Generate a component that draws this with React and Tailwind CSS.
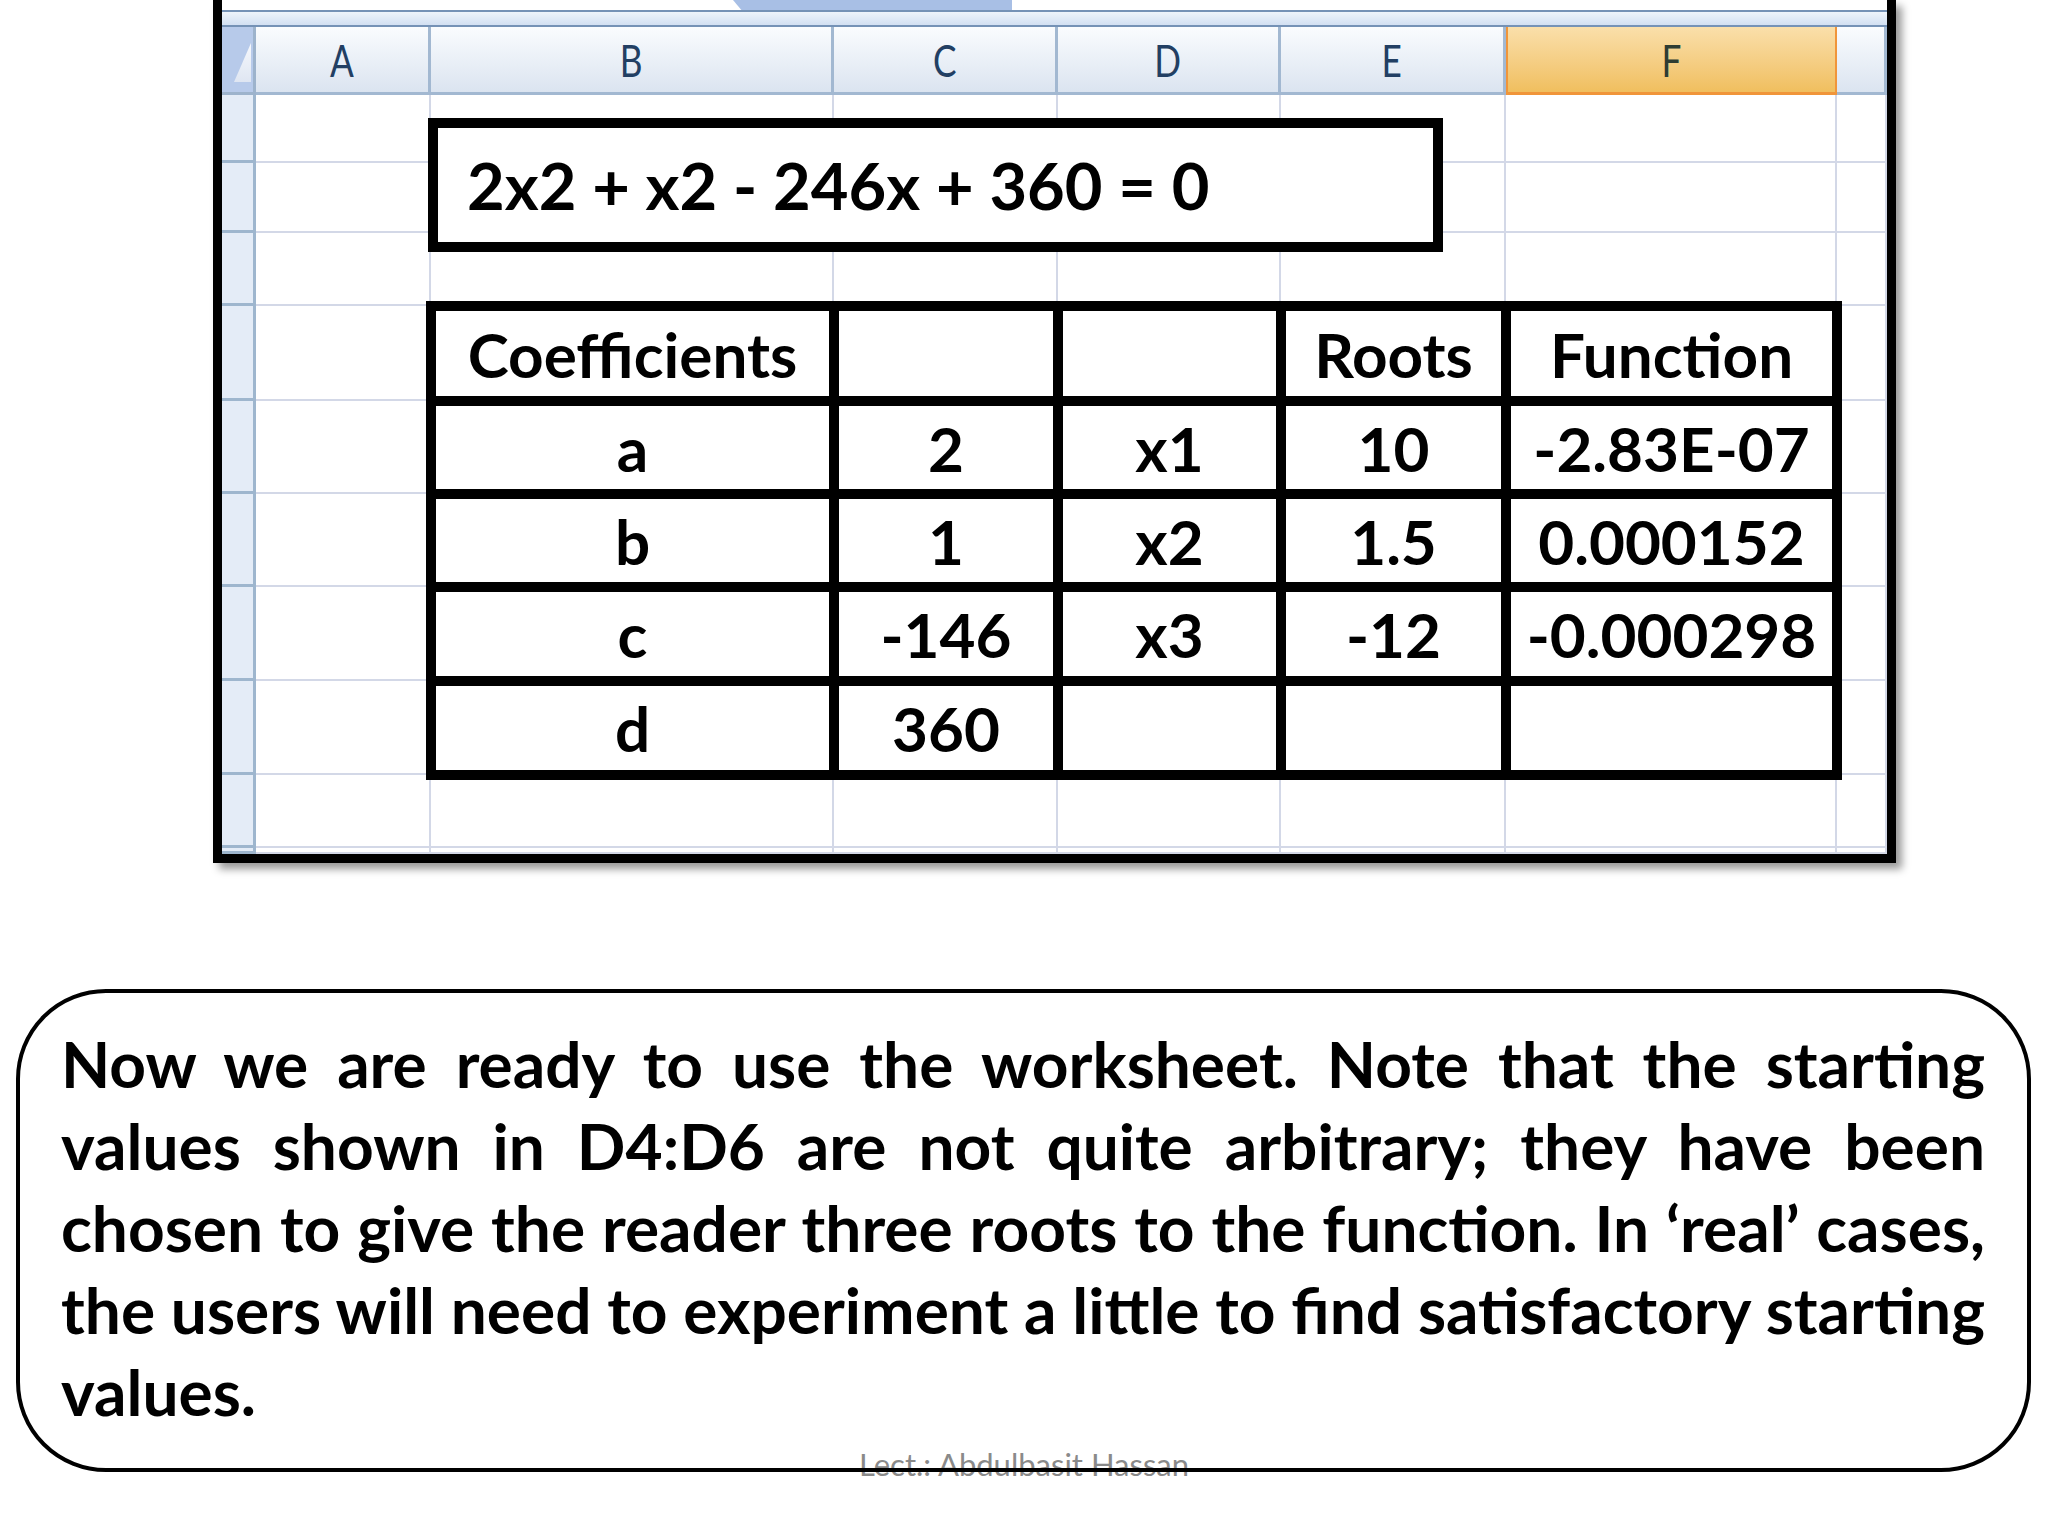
import React from 'react';

const cols = [
  { w: 'w-[175px]', label: 'A' },
  { w: 'w-[403px]', label: 'B' },
  { w: 'w-[224px]', label: 'C' },
  { w: 'w-[223px]', label: 'D' },
  { w: 'w-[225px]', label: 'E' },
  { w: 'w-[331px]', label: 'F', active: true },
  { w: 'w-[50px]', label: '' },
];

const rowHeights = ['h-[68px]', 'h-[70px]', 'h-[73px]', 'h-[95px]', 'h-[93px]', 'h-[93px]', 'h-[94px]', 'h-[94px]', 'h-[73px]', 'h-[6px]'];

const table = [
  ['Coefficients', '', '', 'Roots', 'Function'],
  ['a', '2', 'x1', '10', '-2.83E-07'],
  ['b', '1', 'x2', '1.5', '0.000152'],
  ['c', '-146', 'x3', '-12', '-0.000298'],
  ['d', '360', '', '', ''],
];

const noteLines = [
  'Now we are ready to use the worksheet. Note that the starting',
  'values shown in D4:D6 are not quite arbitrary; they have been',
  'chosen to give the reader three roots to the function. In \u2018real\u2019 cases,',
  'the users will need to experiment a little to find satisfactory starting',
];

const HeaderRow = () => (
  <div className="flex h-[68px]">
    <div className="w-[34px] shrink-0 bg-[#b7caea] border-r-[3px] border-b-[3px] border-[#9db3cc] flex items-end justify-end pb-[10px] pr-[2px]">
      <svg width="17" height="39" viewBox="0 0 17 39">
        <defs>
          <linearGradient id="tri" x1="0" y1="0" x2="0" y2="1">
            <stop offset="0" stopColor="#f6f8fc" />
            <stop offset="1" stopColor="#dfe6f2" />
          </linearGradient>
        </defs>
        <polygon points="17,0 17,39 0,39" fill="url(#tri)" />
      </svg>
    </div>
    {cols.map((c) =>
      c.active ? (
        <div key={c.label} className={`${c.w} shrink-0 bg-gradient-to-b from-[#fadfaa] to-[#f0bf5e] border-x-2 border-b-[3px] border-[#f0953a] flex items-center justify-center`}>
          <span className="text-[44px] text-[#2f3d33] scale-x-80 leading-none">{c.label}</span>
        </div>
      ) : (
        <div key={c.label || 'g'} className={`${c.w} shrink-0 bg-gradient-to-b from-[#fafcfe] to-[#dbe4f0] border-r-[3px] border-b-[3px] border-[#a2b8d1] flex items-center justify-center`}>
          <span className="text-[44px] text-[#223f63] scale-x-80 leading-none">{c.label}</span>
        </div>
      )
    )}
  </div>
);

const Sheet = () => (
  <div className="relative ml-[213px] w-[1683px] bg-white border-x-[9px] border-b-[9px] border-black shadow-[6px_6px_8px_rgba(0,0,0,0.4)]">
    <div className="flex h-[10px] bg-white">
      <div className="ml-[511px] w-[279px] bg-[#a8bfe5] [clip-path:polygon(0_0,100%_0,100%_100%,3%_100%)]" />
    </div>
    <div className="h-[2px] bg-[#7592b6]" />
    <div className="h-[13px] bg-gradient-to-b from-[#eef4fb] to-[#d2e0f2]" />
    <div className="h-[2px] bg-[#7592b6]" />
    <HeaderRow />
    {rowHeights.map((h, r) => (
      <div key={r} className={`flex ${h}`}>
        <div className="w-[34px] shrink-0 bg-[#e4ecf7] border-r-[3px] border-b-[3px] border-[#9eb6ce]" />
        {cols.map((c, ci) => {
          const inTable = r >= 3 && r <= 7 && ci >= 1 && ci <= 5;
          if (inTable) {
            return (
              <div key={ci} className={`${c.w} shrink-0 relative z-10 bg-white flex items-center justify-center shadow-[0_0_0_5px_#000,inset_0_0_0_5px_#000] text-[62px] font-bold text-black leading-none`}>
                {table[r - 3][ci - 1]}
              </div>
            );
          }
          return <div key={ci} className={`${c.w} shrink-0 border-r-2 border-b-2 border-[#d3d8e7]`} />;
        })}
      </div>
    ))}
    <div className="absolute left-[206px] top-[118px] z-20 w-[1015px] h-[134px] border-[10px] border-black bg-white flex items-center pl-[29px]">
      <span className="text-[65px] font-bold text-black leading-none">2x2 + x2 - 246x + 360 = 0</span>
    </div>
  </div>
);

export default function App() {
  return (
    <div className="relative w-[2048px] h-[1536px] bg-white overflow-hidden font-[Lato,sans-serif]">
      <Sheet />
      <div className="absolute left-0 right-0 top-[1449px] text-center text-[31px] leading-none text-[#8a8a8a]">
        Lect.: Abdulbasit Hassan
      </div>
      <div className="relative mt-[126px] ml-[16px] w-[2015px] h-[483px] border-[4px] border-black rounded-[90px] pl-[41px] pr-[42px] pt-[30px]">
        {noteLines.map((line, i) => (
          <div key={i} className="text-[64px] leading-[82px] font-bold text-black text-justify [text-align-last:justify]">
            {line}
          </div>
        ))}
        <div className="text-[64px] leading-[82px] font-bold text-black">values.</div>
      </div>
    </div>
  );
}
